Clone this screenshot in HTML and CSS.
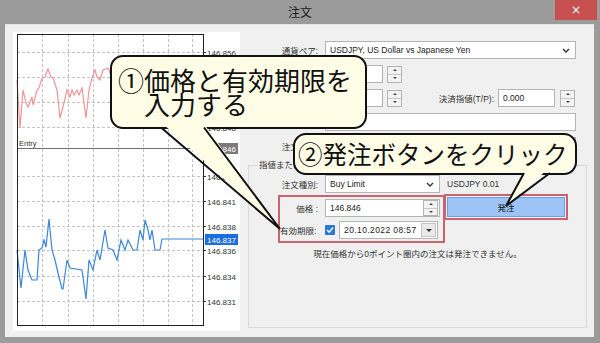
FILE: index.html
```html
<!DOCTYPE html>
<html lang="ja">
<head>
<meta charset="utf-8">
<title>注文</title>
<link rel="stylesheet" href="styles.css">
</head>
<body>
<div class="window">
  <div class="titlebar">
    <span></span>
    <span class="title">注文</span>
    <span class="close">×</span>
  </div>
  <div class="client">
    <div class="chart-panel">
      <svg class="chart" width="227" height="299" viewBox="13 32 227 299">
        <g class="grid">
          <line x1="17" y1="52.5" x2="203" y2="52.5"/>
          <line x1="17" y1="77.5" x2="203" y2="77.5"/>
          <line x1="17" y1="102.5" x2="203" y2="102.5"/>
          <line x1="17" y1="127.5" x2="203" y2="127.5"/>
          <line x1="17" y1="176.5" x2="203" y2="176.5"/>
          <line x1="17" y1="201.5" x2="203" y2="201.5"/>
          <line x1="17" y1="226.5" x2="203" y2="226.5"/>
          <line x1="17" y1="250.5" x2="203" y2="250.5"/>
          <line x1="17" y1="276.5" x2="203" y2="276.5"/>
          <line x1="17" y1="301.5" x2="203" y2="301.5"/>
          <line x1="42.5" y1="34" x2="42.5" y2="325"/>
          <line x1="68.5" y1="34" x2="68.5" y2="325"/>
          <line x1="93.5" y1="34" x2="93.5" y2="325"/>
          <line x1="118.5" y1="34" x2="118.5" y2="325"/>
          <line x1="143.5" y1="34" x2="143.5" y2="325"/>
          <line x1="168.5" y1="34" x2="168.5" y2="325"/>
          <line x1="192.5" y1="34" x2="192.5" y2="325"/>
        </g>
        <line class="sep" x1="17" y1="148.5" x2="203" y2="148.5"/>
        <polyline class="red" points="17,80 20,128 23,90 26,103 28,107 32,97 33,105 37,90 39,88 42,78 45,77 48,69 51,77 53,78 57,90 60,118 63,107 67,90 70,97 72,90 74,95 77,90 79,95 82,88 86,118 89,90 92,78 95,70 97,77 100,80 103,70 108,68 112,78 116,74 120,90 124,84 128,100 132,92 136,80 140,88 144,96 148,84 152,90 156,104 160,96 164,88 168,92 172,100 176,90 180,86 184,94 188,90 203,90"/>
        <polyline class="blue" points="17,250 21,288 25,250 28,270 32,280 37,280 39,250 42,248 44,240 46,247 49,219 52,250 55,260 58,273 62,289 63,289 67,260 70,268 82,270 86,299 89,260 93,270 97,250 100,260 105,230 108,248 113,250 117,260 121,240 125,250 128,240 133,250 137,250 140,230 143,240 145,220 148,230 150,240 152,230 155,250 160,250 162,239 203,239"/>
        <rect class="frame" x="17.5" y="34.5" width="186" height="291"/>
        <text class="entry" x="19" y="146">Entry</text>
        <g class="ticks">
          <line x1="203" y1="52.5" x2="206" y2="52.5"/>
          <line x1="203" y1="77.5" x2="206" y2="77.5"/>
          <line x1="203" y1="102.5" x2="206" y2="102.5"/>
          <line x1="203" y1="127.5" x2="206" y2="127.5"/>
          <line x1="203" y1="176.5" x2="206" y2="176.5"/>
          <line x1="203" y1="201.5" x2="206" y2="201.5"/>
          <line x1="203" y1="226.5" x2="206" y2="226.5"/>
          <line x1="203" y1="250.5" x2="206" y2="250.5"/>
          <line x1="203" y1="276.5" x2="206" y2="276.5"/>
          <line x1="203" y1="301.5" x2="206" y2="301.5"/>
        </g>
        <g class="labels">
          <text x="207" y="55.5">146.856</text>
          <text x="207" y="130.5">146.848</text>
          <text x="207" y="179.5">146.843</text>
          <text x="207" y="204.5">146.841</text>
          <text x="207" y="229.5">146.838</text>
          <text x="207" y="253.5">146.836</text>
          <text x="207" y="279.5">146.834</text>
          <text x="207" y="304.5">146.831</text>
        </g>
        <line class="redmark" x1="205" y1="55.5" x2="237" y2="55.5"/>
        <rect class="tag-gray" x="205" y="143" width="33" height="11"/>
        <text class="tag-text" x="207" y="151.5">146.846</text>
        <rect class="tag-blue" x="205" y="234" width="33" height="11"/>
        <text class="tag-text" x="207" y="242.5">146.837</text>
      </svg>
    </div>

    <div class="form">
      <div class="row">
        <span class="lbl">通貨ペア:</span>
        <div class="field combo w-full">USDJPY, US Dollar vs Japanese Yen
          <svg class="chev" width="8" height="5" viewBox="0 0 8 5"><polyline points="1,1 4,4 7,1"/></svg>
        </div>
      </div>
      <div class="row">
        <span class="lbl"></span>
        <div class="field w-qty"></div>
        <div class="spin"><i class="up"></i><i class="dn"></i></div>
      </div>
      <div class="row">
        <span class="lbl"></span>
        <div class="field w-qty"></div>
        <div class="spin"><i class="up"></i><i class="dn"></i></div>
        <span class="lbl-tp">決済指値(T/P):</span>
        <div class="field w-tp">0.000</div>
        <div class="spin"><i class="up"></i><i class="dn"></i></div>
      </div>
      <div class="row">
        <span class="lbl"></span>
        <div class="field w-full"></div>
      </div>
      <div class="row">
        <span class="lbl">注文種別:</span>
        <div class="field combo w-full">
          <svg class="chev" width="8" height="5" viewBox="0 0 8 5"><polyline points="1,1 4,4 7,1"/></svg>
        </div>
      </div>

      <fieldset class="group">
        <legend>指値または逆指値注文</legend>
        <div class="grow">
          <span class="glbl">注文種別:</span>
          <div class="field combo w-type">Buy Limit
            <svg class="chev" width="8" height="5" viewBox="0 0 8 5"><polyline points="1,1 4,4 7,1"/></svg>
          </div>
          <span class="sym">USDJPY 0.01</span>
        </div>
        <div class="order">
          <div class="hl hl-inputs">
            <div class="prow">
              <span class="plbl">価格 :</span>
              <div class="field w-price">146.846
                <div class="spin inner"><i class="up"></i><i class="dn"></i></div>
              </div>
            </div>
            <div class="prow">
              <span class="plbl elbl">有効期限:</span>
              <svg class="check" width="10" height="10" viewBox="0 0 10 10"><rect x="0" y="0" width="10" height="10" rx="1"/><polyline points="2,5 4.2,7.2 8,2.6"/></svg>
              <div class="field w-date"><span class="date">20.10.2022 08:57</span>
                <span class="dd"><i></i></span>
              </div>
            </div>
          </div>
          <div class="hl hl-button">
            <div class="btn">発注</div>
          </div>
        </div>
        <p class="msg">現在価格から0ポイント圏内の注文は発注できません。</p>
      </fieldset>
    </div>
  </div>

  <div class="bubble b1">①価格と有効期限を
　入力する</div>
  <div class="bubble b2">②発注ボタンをクリック</div>
  <svg class="tails" width="600" height="343" viewBox="0 0 600 343">
    <polygon class="tail-fill" points="163,124 204,124 280,229"/>
    <polyline class="tail-line" points="161,127.5 280,229 204,127.5"/>
    <polygon class="tail-fill" points="526,169 548,169 506,206"/>
    <polyline class="tail-line" points="524,173 506,206 550,173"/>
  </svg>
</div>
</body>
</html>
```

FILE: styles.css
```css
* { box-sizing: border-box; }
html, body { margin: 0; padding: 0; }
body {
  width: 600px;
  height: 343px;
  overflow: hidden;
  font-family: "Liberation Sans", "Noto Sans CJK JP", sans-serif;
  font-size: 8.5px;
  color: #202020;
}

.window {
  position: relative;
  width: 600px;
  height: 343px;
  background: #9b9b9b;
  display: flex;
  flex-direction: column;
}

.titlebar {
  height: 24px;
  flex: none;
  display: grid;
  grid-template-columns: 1fr auto 1fr;
  align-items: start;
}
.title {
  font-family: "Noto Sans CJK JP", sans-serif;
  font-size: 12px;
  line-height: 24px;
  color: #1c1c1c;
}
.close {
  justify-self: end;
  width: 42px;
  height: 20px;
  margin-right: 3px;
  background: #c75050;
  color: #fff;
  font-family: "DejaVu Sans", sans-serif;
  font-size: 12px;
  line-height: 20px;
  text-align: center;
}

.client {
  flex: 1;
  margin: 0 6px 6px 5px;
  background: #f0f0f0;
  border-top: 1px solid #e4e4e4;
  display: flex;
  padding: 7px 7px 0 8px;
}

.chart-panel {
  flex: none;
  width: 227px;
  height: 299px;
  background: #fff;
}
.chart { display: block; }
.chart .grid line { stroke: #c4c4c4; stroke-width: 1; stroke-dasharray: 3 2; }
.chart .sep { stroke: #6e6e6e; stroke-width: 1; }
.chart .frame { fill: none; stroke: #222; stroke-width: 1; }
.chart .ticks line { stroke: #333; stroke-width: 1; }
.chart .red { fill: none; stroke: #f0959a; stroke-width: 1.2; }
.chart .blue { fill: none; stroke: #3a86dd; stroke-width: 1.2; }
.chart text { font-family: "Liberation Sans", sans-serif; font-size: 8px; fill: #333; }
.chart .entry { font-size: 7.5px; fill: #333; }
.chart .redmark { stroke: #e05060; stroke-width: 1; }
.chart .tag-gray { fill: #7a7a7a; }
.chart .tag-blue { fill: #1c6fe0; }
.chart .tag-text { fill: #fff; }

.form {
  flex: none;
  width: 339px;
  margin-left: 8px;
  display: flex;
  flex-direction: column;
}
.row {
  display: flex;
  align-items: center;
  height: 18px;
  margin-top: 6px;
}
.row:first-child { margin-top: 9px; }
.lbl {
  width: 70px;
  margin-right: 7px;
  text-align: right;
  white-space: nowrap;
  color: #333;
}
.lbl-tp {
  width: 92px;
  margin-right: 4px;
  text-align: right;
  white-space: nowrap;
  color: #333;
}

.field {
  position: relative;
  height: 18px;
  background: #fff;
  border: 1px solid #b4b4b4;
  padding-left: 4px;
  display: flex;
  align-items: center;
  white-space: nowrap;
  color: #222;
}
.combo { padding-right: 16px; }
.chev {
  position: absolute;
  right: 5px;
  top: 6px;
}
.chev polyline { fill: none; stroke: #333; stroke-width: 1.4; }
.w-full { width: 251px; }
.w-qty { width: 58px; }
.w-tp { width: 57px; }
.w-type { width: 115px; }
.w-price { width: 115px; }
.w-date { width: 99px; padding-left: 4px; }

.spin {
  width: 15px;
  height: 17px;
  margin-left: 4px;
  border: 1px solid #b4b4b4;
  background: #f3f3f3;
  display: flex;
  flex-direction: column;
}
.field + .spin + .lbl-tp + .field + .spin { margin-left: 5px; }
.spin i {
  flex: 1;
  display: flex;
  align-items: center;
  justify-content: center;
}
.spin i.up { border-bottom: 1px solid #c8c8c8; }
.spin i::before {
  content: "";
  border-left: 2px solid transparent;
  border-right: 2px solid transparent;
  border-bottom: 2px solid #444;
}
.spin i.dn::before {
  border-bottom: 0;
  border-top: 2px solid #444;
}
.spin.inner {
  position: absolute;
  right: 1px;
  top: 0;
  height: 16px;
  width: 15px;
  margin: 0;
}

.group {
  flex: 1;
  margin: 5px 0 9px 0;
  padding: 4px 0 0 0;
  border: 1px solid #d9d9d9;
  min-width: 0;
}
.group legend {
  margin-left: 8px;
  padding: 0 2px;
  line-height: 11px;
  color: #333;
}
.grow {
  display: flex;
  align-items: center;
  height: 18px;
}
.glbl {
  width: 69px;
  margin-right: 7px;
  text-align: right;
  white-space: nowrap;
  color: #333;
}
.sym { margin-left: 7px; color: #333; }

.order {
  display: flex;
  align-items: flex-start;
  margin-top: 2px;
  margin-left: 29px;
}
.hl { border: 2px solid #c9636f; }
.hl-inputs {
  padding: 2px 3px 2px 0;
  display: flex;
  flex-direction: column;
  gap: 4px;
}
.prow {
  display: flex;
  align-items: center;
  height: 18px;
}
.plbl {
  width: 38px;
  margin-right: 7px;
  text-align: right;
  white-space: nowrap;
  color: #333;
}
.elbl { margin-right: 9px; width: 36px; }
.check { flex: none; margin-right: 4px; }
.check rect { fill: #2a78d6; }
.check polyline { fill: none; stroke: #fff; stroke-width: 1.5; }
.date { letter-spacing: 0.4px; }
.dd {
  position: absolute;
  right: 1px;
  top: 1px;
  width: 15px;
  height: 14px;
  background: #e9e9e9;
  border: 1px solid #c4c4c4;
  display: flex;
  align-items: center;
  justify-content: center;
}
.dd i {
  border-left: 3px solid transparent;
  border-right: 3px solid transparent;
  border-top: 3px solid #333;
}
.hl-button {
  margin-left: -1px;
  margin-top: -1px;
  padding: 1px;
}
.btn {
  width: 118px;
  height: 20px;
  background: #9cc4f6;
  border: 1px solid #6f9fde;
  display: flex;
  align-items: center;
  justify-content: center;
  color: #111;
}
.msg {
  margin: 5px 0 0 0;
  line-height: 12px;
  text-align: center;
  color: #333;
}

.bubble {
  position: absolute;
  background: #fffde6;
  border: 2px solid #111;
  border-radius: 13px;
  font-family: "Noto Sans CJK JP", sans-serif;
  color: #111;
  white-space: pre;
}
.b1 {
  left: 110px;
  top: 55px;
  width: 257px;
  height: 74px;
  font-size: 26px;
  line-height: 24px;
  padding: 11px 0 0 6px;
}
.b2 {
  left: 293px;
  top: 133px;
  width: 284px;
  height: 42px;
  font-size: 24.5px;
  line-height: 37px;
  padding-left: 3px;
}
.tails {
  position: absolute;
  left: 0;
  top: 0;
  pointer-events: none;
}
.tail-fill { fill: #fffde6; }
.tail-line { fill: none; stroke: #111; stroke-width: 2; stroke-linejoin: miter; }
```
